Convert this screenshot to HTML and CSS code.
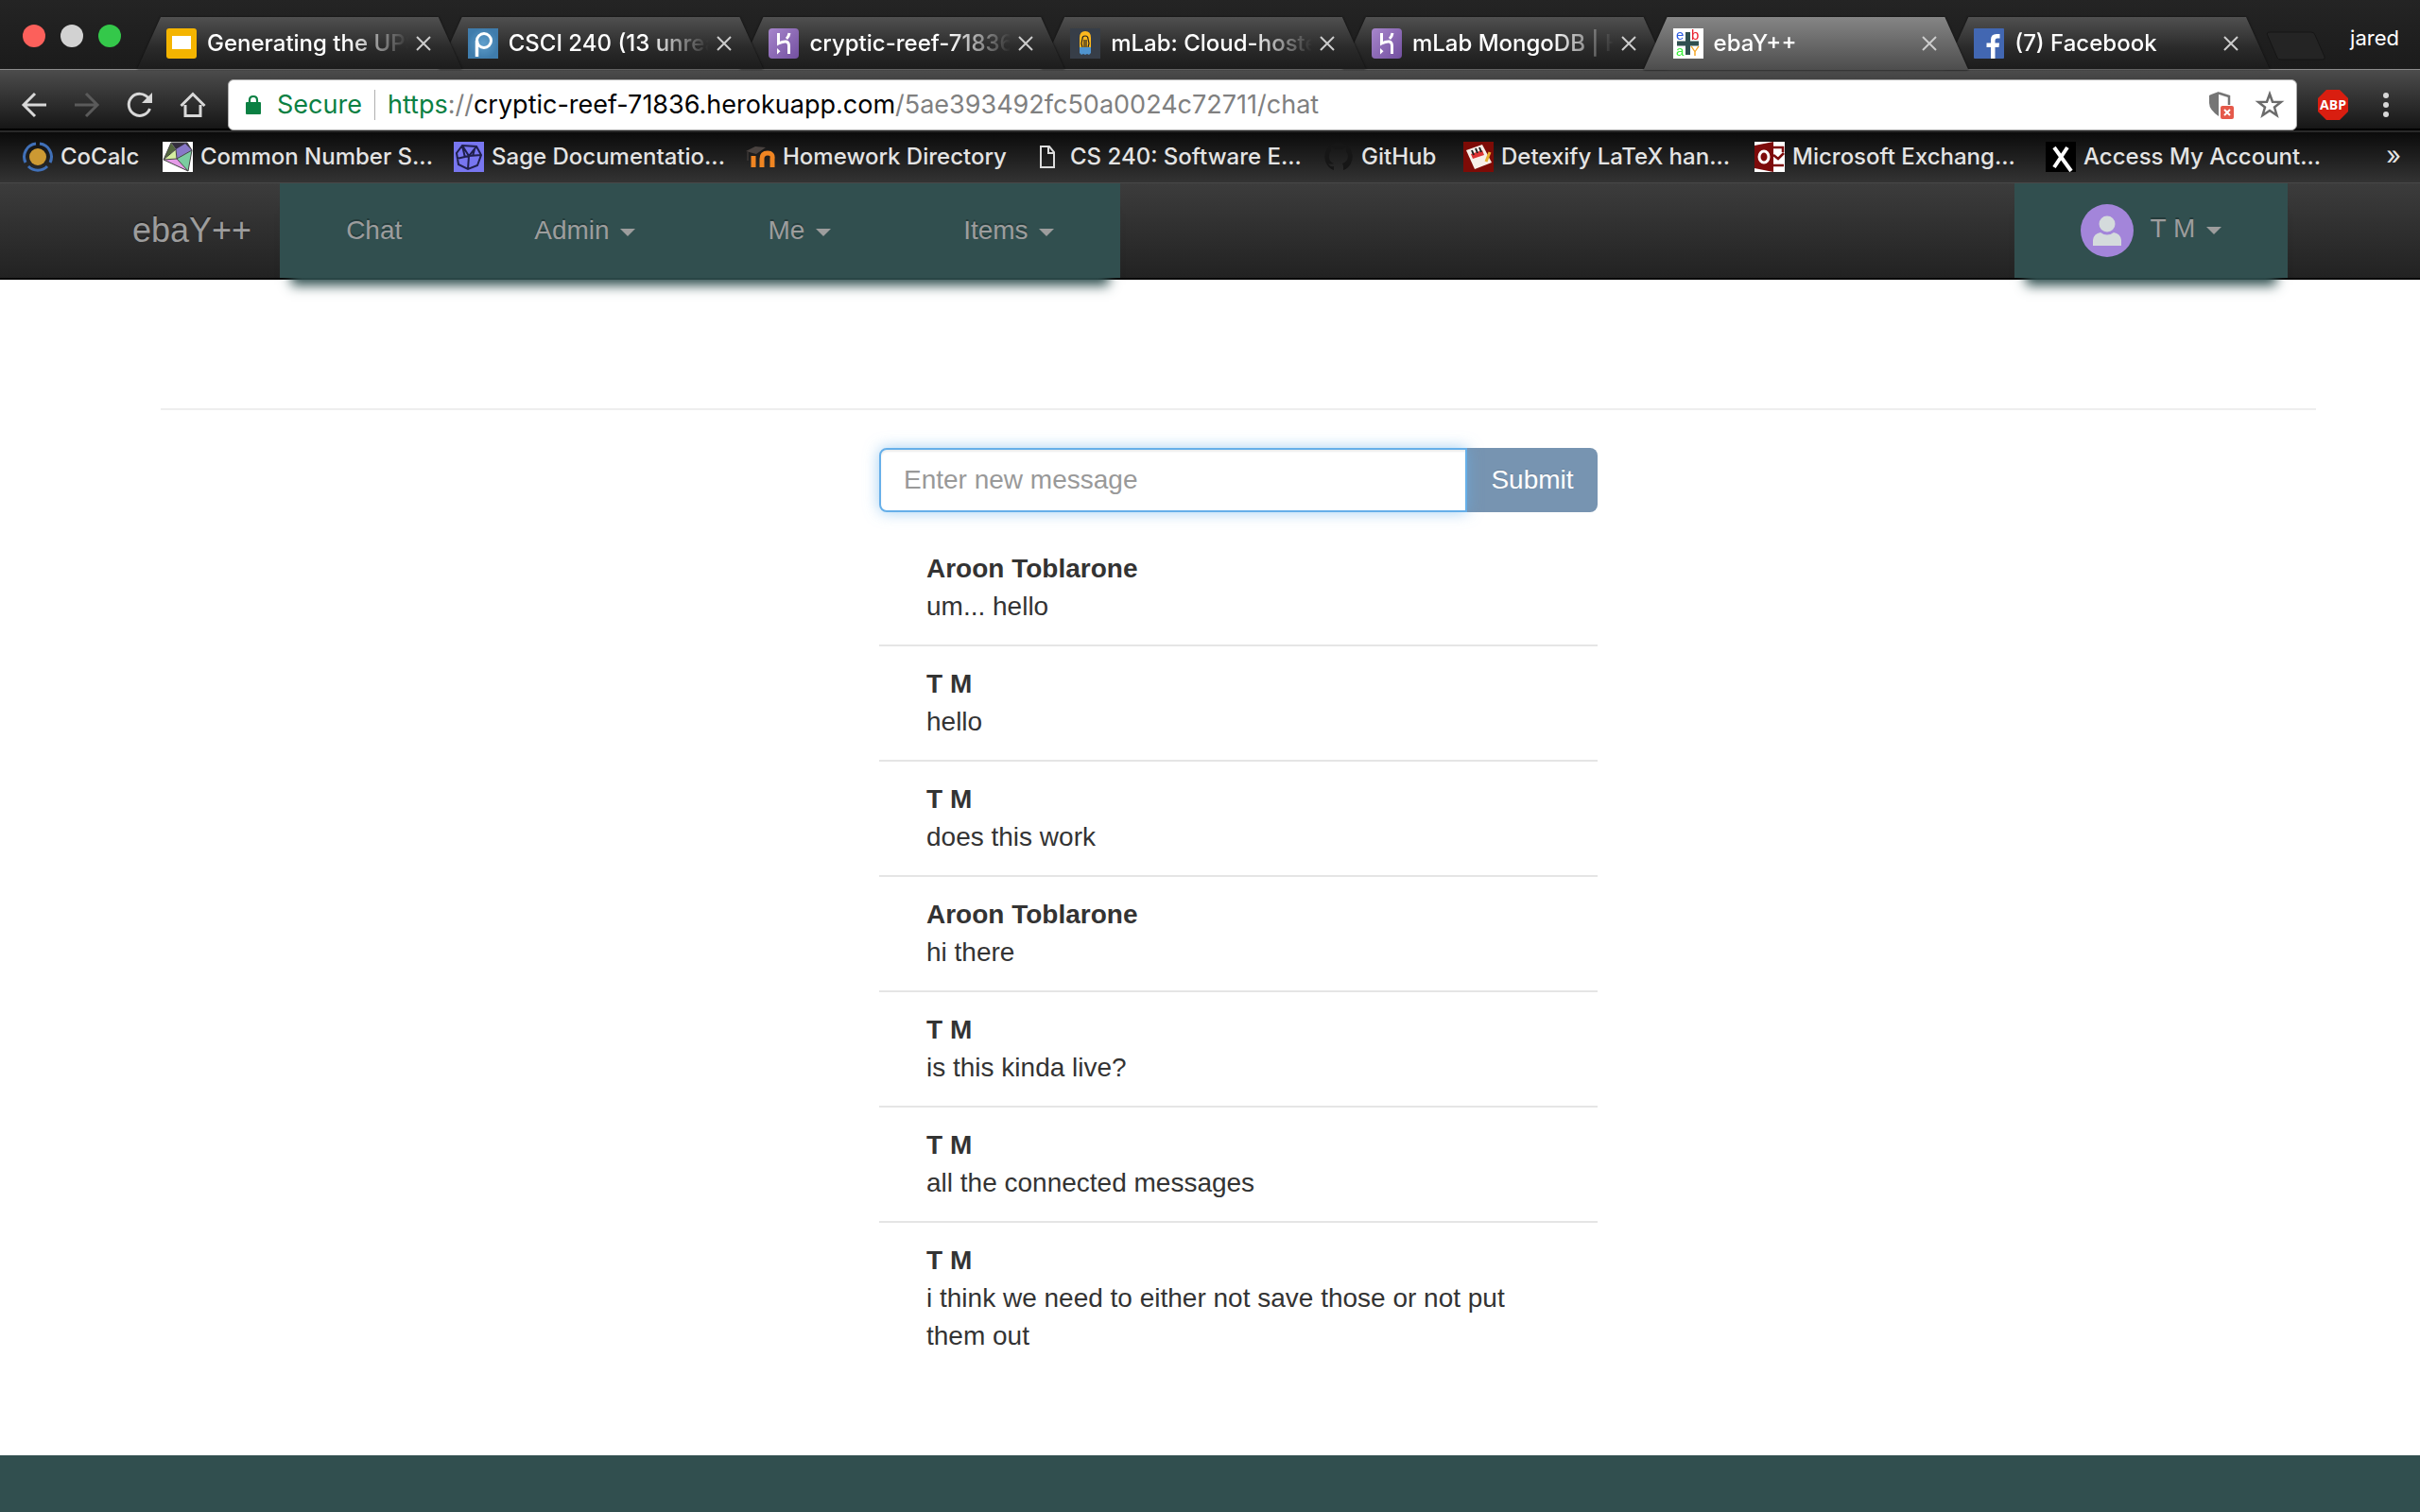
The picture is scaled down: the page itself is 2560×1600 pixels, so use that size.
FILE: index.html
```
<!DOCTYPE html>
<html lang="en">
<head>
<meta charset="utf-8">
<title>ebaY++</title>
<link rel="stylesheet" href="styles.css">
</head>
<body>
<header class="browser">
  <div class="tabstrip">
    <div class="lights"><span class="light light-close"></span><span class="light light-min"></span><span class="light light-max"></span></div>
    <nav class="tabs" aria-label="Tabs">
      <div class="tab"><div class="tab-body">
        <svg class="icon32" viewBox="0 0 32 32"><rect width="32" height="32" rx="3" fill="#f4b400"/><rect x="6" y="8" width="20" height="14" fill="#fff"/></svg>
        <span class="tab-title">Generating the UPS</span>
        <button class="tab-close" aria-label="Close tab"><svg viewBox="0 0 16 16"><path d="M1 1L15 15M15 1L1 15"/></svg></button>
      </div></div>
      <div class="tab"><div class="tab-body">
        <svg class="icon32" viewBox="0 0 32 32"><defs><radialGradient id="pz"><stop stop-color="#5f9fcc"/><stop offset="1" stop-color="#3f7cac"/></radialGradient></defs><rect width="32" height="32" fill="url(#pz)"/><path d="M9.500 30V13" fill="none" stroke="#fff" stroke-width="3.500"/><circle cx="17" cy="13" r="7.500" fill="none" stroke="#fff" stroke-width="3"/></svg>
        <span class="tab-title">CSCI 240 (13 unread)</span>
        <button class="tab-close" aria-label="Close tab"><svg viewBox="0 0 16 16"><path d="M1 1L15 15M15 1L1 15"/></svg></button>
      </div></div>
      <div class="tab"><div class="tab-body">
        <svg class="icon32" viewBox="0 0 32 32"><defs><linearGradient id="hk" x2="1" y2="1"><stop stop-color="#a786cc"/><stop offset="1" stop-color="#7350a0"/></linearGradient></defs><rect width="32" height="32" rx="4" fill="url(#hk)"/><path d="M10.500 5V16Q21 11 21.500 18V27M22 5Q21.500 8.500 19 11" fill="none" stroke="#fff" stroke-width="3"/><path d="M9 21L12.500 24.200L9 27.500Z" fill="#fff"/></svg>
        <span class="tab-title">cryptic-reef-71836</span>
        <button class="tab-close" aria-label="Close tab"><svg viewBox="0 0 16 16"><path d="M1 1L15 15M15 1L1 15"/></svg></button>
      </div></div>
      <div class="tab"><div class="tab-body">
        <svg class="icon32" viewBox="0 0 32 32"><rect width="32" height="32" fill="#373e48"/><path d="M10 21V10Q10 3 16 3T22 10V21Z" fill="#fdb81e"/><path d="M13 20L12 16L13 11Q13 8 16 8T19 11L20 16L19 20M15 20V12M17 20V12" fill="none" stroke="#222" stroke-width="1.200"/><path d="M10 20H22V26L20 28L18 27L16 28L14 27L12 28L10 26Z" fill="#4f94d0"/></svg>
        <span class="tab-title">mLab: Cloud-hosted</span>
        <button class="tab-close" aria-label="Close tab"><svg viewBox="0 0 16 16"><path d="M1 1L15 15M15 1L1 15"/></svg></button>
      </div></div>
      <div class="tab"><div class="tab-body">
        <svg class="icon32" viewBox="0 0 32 32"><rect width="32" height="32" rx="4" fill="url(#hk)"/><path d="M10.500 5V16Q21 11 21.500 18V27M22 5Q21.500 8.500 19 11" fill="none" stroke="#fff" stroke-width="3"/><path d="M9 21L12.500 24.200L9 27.500Z" fill="#fff"/></svg>
        <span class="tab-title">mLab MongoDB | H</span>
        <button class="tab-close" aria-label="Close tab"><svg viewBox="0 0 16 16"><path d="M1 1L15 15M15 1L1 15"/></svg></button>
      </div></div>
      <div class="tab tab-active"><div class="tab-body">
        <svg class="icon32" viewBox="0 0 32 32" font-family="Liberation Sans, sans-serif" font-size="15"><rect width="32" height="32" fill="#fff"/><path d="M15.500 4V28M4 16H27" stroke="#2f4f4f" stroke-width="5"/><text x="3" y="12" fill="#2a5be0">e</text><text x="19" y="12" fill="#e8202c">b</text><text x="3" y="29" fill="#3bf03b">a</text><text x="18" y="29" fill="#f5a623">Y</text></svg>
        <span class="tab-title">ebaY++</span>
        <button class="tab-close" aria-label="Close tab"><svg viewBox="0 0 16 16"><path d="M1 1L15 15M15 1L1 15"/></svg></button>
      </div></div>
      <div class="tab"><div class="tab-body">
        <svg class="icon32" viewBox="0 0 32 32"><rect width="32" height="32" rx="1" fill="#4267b2"/><path d="M18 32V20H13.500V15.500H18V12Q18 6 24 6H27.500V10.500H25Q22.500 10.500 22.500 13V15.500H27L26.500 20H22.500V32Z" fill="#fff"/></svg>
        <span class="tab-title">(7) Facebook</span>
        <button class="tab-close" aria-label="Close tab"><svg viewBox="0 0 16 16"><path d="M1 1L15 15M15 1L1 15"/></svg></button>
      </div></div>
    </nav>
    <button class="new-tab" aria-label="New tab"><svg viewBox="0 0 64 32"><path d="M4 1H48Q51 1 52 4L62 27Q63 30 60 30H16Q13 30 12 28L2 5Q0 1 4 1Z" fill="#242424" stroke="#151515"/></svg></button>
    <span class="profile">jared</span>
  </div>

  <div class="toolbar">
    <button class="tool" aria-label="Back"><svg viewBox="0 0 32 32"><path d="M29 16H5M17 4L5 16L17 28"/></svg></button>
    <button class="tool tool-off" aria-label="Forward"><svg viewBox="0 0 32 32"><path d="M3 16H27M15 4L27 16L15 28"/></svg></button>
    <button class="tool" aria-label="Reload"><svg viewBox="0 0 32 32"><path d="M26.500 20A11.500 11.500 0 1 1 25 9"/><path class="solid" d="M29 3V14H18Z"/></svg></button>
    <button class="tool" aria-label="Home"><svg viewBox="0 0 32 32"><path d="M3.500 17L16 4.500L28.500 17M8 16V27.500H24V16"/></svg></button>
    <div class="omnibox">
      <svg class="lock" viewBox="0 0 16 22"><rect y="8" width="16" height="13" rx="1" fill="#0b8043"/><path d="M4 9V6Q4 2 8 2T12 6V9" fill="none" stroke="#0b8043" stroke-width="2.200"/></svg>
      <span class="secure">Secure</span>
      <span class="url"><span class="scheme">https</span>://<span class="host">cryptic-reef-71836.herokuapp.com</span>/5ae393492fc50a0024c72711/chat</span>
      <button class="omni-btn" aria-label="Blocked content"><svg viewBox="0 0 32 32"><path d="M6 5L14 2V28Q4 21 4 14V6Z" fill="#757575"/><path d="M14 3.500L25 7V16" fill="none" stroke="#757575" stroke-width="2.500"/><rect x="16" y="17" width="14" height="14" rx="2" fill="#e5594a"/><path d="M20 21L26 27M26 21L20 27" stroke="#fff" stroke-width="2"/></svg></button>
      <button class="omni-btn" aria-label="Bookmark this page"><svg viewBox="0 0 32 32"><path d="M16 4.500L19 12.700L28 13L21 18.500L23.500 27L16 22L8.500 27L11 18.500L4 13L13 12.700Z" fill="none" stroke="#6b6b6b" stroke-width="2.500"/></svg></button>
    </div>
    <button class="ext" aria-label="Adblock Plus"><svg viewBox="0 0 32 32"><path d="M9 0H23L32 9V23L23 32H9L0 23V9Z" fill="#d91e10"/><text x="16" y="21" text-anchor="middle" font-family="Open Sans, sans-serif" font-weight="700" font-size="14" fill="#fff">ABP</text></svg></button>
    <button class="menu" aria-label="Menu"><svg viewBox="0 0 8 32"><circle cx="4" cy="6" r="3"/><circle cx="4" cy="16" r="3"/><circle cx="4" cy="26" r="3"/></svg></button>
  </div>

  <nav class="bookmarks" aria-label="Bookmarks">
    <a class="bm bm-short" href="#"><svg class="icon32" viewBox="0 0 32 32"><circle cx="16" cy="16" r="9" fill="#cc9933"/><g fill="none" stroke="#4070b8" stroke-width="3"><path d="M14 2A14 14 0 0 0 3 22M18 2A14 14 0 0 1 29 22M6 26A14 14 0 0 0 26 26"/></g></svg>CoCalc</a>
    <a class="bm" href="#"><svg class="icon32" viewBox="0 0 32 32"><rect width="32" height="32" fill="#fff"/><path d="M1 19L9 1L14 8Z" fill="#54683f"/><path d="M9 1L26 1L31 9L14 8Z" fill="#332d3c"/><path d="M14 8L24 2L31 9L15 18Z" fill="#8878c8"/><path d="M1 19L14 8L15 18Z" fill="#d5efa0"/><path d="M1 19L15 18L27 31Z" fill="#e59be8"/><path d="M31 9L15 18L27 31Z" fill="#7bcda0"/><path d="M1 19L9 1L26 1L31 9L27 31ZM1 19L14 8M14 8L15 18M1 19L15 18L27 31M15 18L31 9" fill="none" stroke="#444"/></svg>Common Number S...</a>
    <a class="bm" href="#"><svg class="icon32" viewBox="0 0 32 32"><rect width="32" height="32" fill="#7876f0"/><g fill="none" stroke="#20204c" stroke-width="2"><path d="M9 4L24 5L29 14L25 25L15 29L5 24L3 12ZM9 4L16 15L24 5M3 18L16 15L29 14M16 15L15 29M9 4L12 17M22 8L20 15"/></g></svg>Sage Documentatio...</a>
    <a class="bm bm-mid" href="#"><svg class="icon32" viewBox="0 0 32 32"><path d="M9 27V15M18 27V18Q18 12 24 12T29 18V27" fill="none" stroke="#f08522" stroke-width="5"/><path d="M1 10L11 5L22 6L12 13Z" fill="#4a4340"/><path d="M3 11V20" stroke="#4a4340"/></svg>Homework Directory</a>
    <a class="bm" href="#"><svg class="icon32" viewBox="0 0 32 32"><path d="M9 5H18L23 11V27H9ZM17 5V12H23" fill="none" stroke="#ddd" stroke-width="2"/></svg>CS 240: Software E...</a>
    <a class="bm bm-short" href="#"><svg class="icon32" viewBox="0 0 32 32"><path d="M16 1A15 15 0 0 0 11 30V26Q7 27 5 23Q8 24 11 23Q5 21 6 14Q6 11 8 10L8 5L13 8H19L24 5V10Q26 12 26 15Q26 21 20 23Q21 24 21 26V30A15 15 0 0 0 16 1Z" fill="#161616"/></svg>GitHub</a>
    <a class="bm" href="#"><svg class="icon32" viewBox="0 0 32 32"><rect width="32" height="32" fill="#7d0b06"/><path d="M3 9L20 3L30 22L12 29Z" fill="#f7efe8"/><path d="M8 13L20 9L22 14L10 18Z" fill="#d33"/><path d="M9 9L11 14M13 7L15 12M17 6L19 11" stroke="#222" stroke-width="2"/><path d="M28 11L24 21" stroke="#e8b030" stroke-width="3"/></svg>Detexify LaTeX han...</a>
    <a class="bm" href="#"><svg class="icon32" viewBox="0 0 32 32"><rect width="32" height="32" fill="#fff"/><path d="M0 4L20 0V32L0 28Z" fill="#7d0b0b"/><ellipse cx="10" cy="16" rx="5" ry="6" fill="none" stroke="#fff" stroke-width="3"/><path d="M20 6H30V11M20 14L25 18L31 12M20 25H31" fill="none" stroke="#7d0b0b" stroke-width="2.500"/></svg>Microsoft Exchang...</a>
    <a class="bm" href="#"><svg class="icon32" viewBox="0 0 32 32"><rect width="32" height="32" fill="#000"/><path d="M9 6L27 31M23 6L9 27" fill="none" stroke="#fff" stroke-width="4"/></svg>Access My Account...</a>
    <button class="overflow" aria-label="More bookmarks">»</button>
  </nav>
</header>

<nav class="navbar">
  <a class="brand" href="#">ebaY++</a>
  <div class="nav-group">
    <a class="nav-link" href="#">Chat</a>
    <a class="nav-link" href="#">Admin <span class="caret"></span></a>
    <a class="nav-link" href="#">Me <span class="caret"></span></a>
    <a class="nav-link" href="#">Items <span class="caret"></span></a>
  </div>
  <div class="nav-group nav-user">
    <a class="nav-link user-link" href="#"><svg class="avatar" viewBox="0 0 56 56"><circle cx="28" cy="28" r="28" fill="#a385da"/><circle cx="28" cy="21" r="8.500" fill="#d4dbdc"/><path d="M13 44V38Q14 31 21 30Q28 35 35 30Q42 31 43 38V44Z" fill="#d4dbdc"/></svg><span class="user-name">T M <span class="caret"></span></span></a>
  </div>
</nav>

<main class="page">
  <div class="container">
    <hr class="rule">
    <div class="row">
      <section class="chat">
        <form class="composer">
          <input class="message-input" type="text" aria-label="New message" placeholder="Enter new message">
          <button class="submit" type="button">Submit</button>
        </form>
        <ul class="messages">
          <li class="message"><strong>Aroon Toblarone</strong><p>um... hello</p></li>
          <li class="message"><strong>T M</strong><p>hello</p></li>
          <li class="message"><strong>T M</strong><p>does this work</p></li>
          <li class="message"><strong>Aroon Toblarone</strong><p>hi there</p></li>
          <li class="message"><strong>T M</strong><p>is this kinda live?</p></li>
          <li class="message"><strong>T M</strong><p>all the connected messages</p></li>
          <li class="message"><strong>T M</strong><p>i think we need to either not save those or not put them out</p></li>
        </ul>
      </section>
    </div>
  </div>
</main>
<footer class="footer"></footer>
</body>
</html>
```
FILE: styles.css
```
* { box-sizing: border-box; }

body {
  margin: 0;
  min-height: 100vh;
  display: flex;
  flex-direction: column;
  background: #fff;
  color: #333;
  font: 28px/40px "Liberation Sans", Arial, sans-serif;
}

button {
  padding: 0;
  border: 0;
  background: none;
  color: inherit;
  font: inherit;
}

a { color: inherit; text-decoration: none; }
svg { display: block; flex: none; }
.icon32 { width: 32px; height: 32px; }

/* Browser chrome */
.browser {
  font-family: Inter, sans-serif;
  font-size: 24px;
  line-height: 32px;
  color: #e4e4e4;
}

.tabstrip {
  display: flex;
  align-items: flex-end;
  height: 73px;
  background: linear-gradient(#242424, #1b1b1b);
}

.lights { display: flex; gap: 16px; width: 145px; padding-left: 24px; align-self: flex-start; padding-top: 26px; }
.light { width: 24px; height: 24px; border-radius: 50%; }
.light-close { background: #fc605b; }
.light-min { background: #d2d2d2; }
.light-max { background: #34c84a; }

.tabs { display: flex; flex: 1; min-width: 0; height: 55px; }

.tab {
  flex: 1 1 0;
  min-width: 0;
  height: 55px;
  margin-right: -25px;
  filter: drop-shadow(0 0 1px #0c0c0c);
}
.tab:last-child { margin-right: 0; }
.tab:nth-child(1) { z-index: 7; }
.tab:nth-child(2) { z-index: 6; }
.tab:nth-child(3) { z-index: 5; }
.tab:nth-child(4) { z-index: 4; }
.tab:nth-child(5) { z-index: 3; }
.tab:nth-child(6) { z-index: 8; }
.tab:nth-child(7) { z-index: 1; }

.tab-body {
  display: flex;
  align-items: center;
  height: 55px;
  padding: 1px 33px 0 31px;
  background: linear-gradient(#505050, #2a2a2a 60%, #1c1c1c);
  clip-path: polygon(25px 0, calc(100% - 25px) 0, 100% 100%, 0 100%);
  color: #fff;
}
.tab-active .tab-body { height: 56px; padding-bottom: 1px; background: linear-gradient(#858585, #4d4d4d); }

.tab-title {
  flex: 1;
  min-width: 0;
  margin: 0 8px 0 11px;
  overflow: hidden;
  white-space: nowrap;
  font-weight: 500;
  -webkit-mask-image: linear-gradient(to left, transparent, #000 64px);
  mask-image: linear-gradient(to left, transparent, #000 64px);
}

.tab-close { width: 16px; }
.tab-close svg { width: 16px; height: 16px; fill: none; stroke: #ccc; stroke-width: 2; }

.new-tab { width: 64px; margin: 0 0 8px -4px; }
.new-tab svg { width: 64px; height: 32px; }
.profile { width: 99px; padding: 0 22px 18px 0; text-align: right; font-size: 22px; line-height: 30px; color: #fff; }

.toolbar {
  display: flex;
  align-items: center;
  height: 67px;
  padding: 9px 0 0 8px;
  border-top: 1px solid #8c8c8c;
  border-bottom: 2px solid #292929;
  background: linear-gradient(#4c4c4c, #161616 62px, #000 62px);
}
.tool { width: 56px; }
.tool svg { width: 32px; height: 32px; margin: 0 auto; fill: none; stroke: #d8d8d8; stroke-width: 3; }
.tool .solid { fill: #d8d8d8; stroke: none; }
.tool-off svg { stroke: #5a5a5a; }

.omnibox {
  display: flex;
  align-items: center;
  flex: 1;
  min-width: 0;
  height: 54px;
  margin-left: 9px;
  padding: 0 2px 0 18px;
  border: 1px solid #aaa;
  border-radius: 6px;
  background: #fff;
  font-size: 27px;
  color: #808080;
}
.lock { width: 16px; height: 22px; }
.secure { margin-left: 17px; padding-right: 13px; border-right: 1px solid #b0b0b0; color: #0b8043; }
.url { flex: 1; min-width: 0; margin-left: 13px; overflow: hidden; white-space: nowrap; }
.scheme { color: #0b8043; }
.host { color: #000; }
.omni-btn { width: 52px; }
.omni-btn svg { width: 32px; height: 32px; margin: 0 auto; }
.ext { width: 32px; margin: 0 36px 0 22px; }
.ext svg { width: 32px; height: 32px; }
.menu { width: 8px; margin-right: 32px; }
.menu svg { width: 8px; height: 32px; fill: #d8d8d8; }

.bookmarks {
  display: flex;
  align-items: center;
  height: 54px;
  padding: 0 20px 4px 24px;
  overflow: hidden;
  border-bottom: 1px solid #484848;
  background: linear-gradient(#0b0b0b, #333);
}
.bm { display: flex; flex: none; align-items: center; gap: 8px; width: 308px; padding-top: 2px; font-weight: 500; white-space: nowrap; }
.bm-short { width: 148px; }
.bm-mid { width: 304px; }
.overflow { margin-left: auto; font-size: 27px; }

/* Site navigation */
.navbar {
  display: flex;
  height: 102px;
  padding: 0 140px;
  border-bottom: 2px solid #080808;
  background: linear-gradient(#3c3c3c, #222);
  color: #9d9d9d;
  text-shadow: 0 -2px 0 rgba(0, 0, 0, .25);
}
.brand { padding: 30px 30px 30px 0; font-size: 36px; }
.nav-group {
  display: flex;
  height: 100px;
  background: #314f4f;
  box-shadow: 0 20px 12px -12px #2f4f4f;
}
.nav-link { padding: 30px 70px; }
.nav-user { margin-left: auto; }
.user-link { display: flex; align-items: center; gap: 18px; }
.avatar { width: 56px; height: 56px; }
.user-name { padding-bottom: 4px; }
.caret {
  display: inline-block;
  margin-left: 4px;
  vertical-align: middle;
  border-top: 8px solid;
  border-right: 8px solid transparent;
  border-left: 8px solid transparent;
}

/* Chat page */
.page { flex: 1; padding: 136px 0 106px 60px; }
.container { max-width: 2280px; margin: 0 auto; }
.rule { margin: 0 0 40px; border: 0; border-top: 2px solid #eee; }
.row { display: grid; grid-template-columns: repeat(3, 1fr); }
.chat { grid-column: 2; }
.composer { display: flex; }
.message-input {
  flex: 1;
  min-width: 0;
  height: 68px;
  padding: 12px 24px;
  border: 2px solid #66afe9;
  border-radius: 8px 0 0 8px;
  background: #fff;
  box-shadow: inset 0 2px 2px rgba(0, 0, 0, .075), 0 0 16px rgba(102, 175, 233, .6);
  color: #555;
  font: inherit;
  z-index: 1;
}
.message-input::placeholder { color: #999; opacity: 1; }
.submit {
  width: 138px;
  border-radius: 0 8px 8px 0;
  background: #7794b1;
  color: #fff;
  text-shadow: 0 -1px 0 rgba(0, 0, 0, .15);
}
.messages { margin: 20px 0 0; padding: 0; list-style: none; }
.message { padding: 20px 50px; border-bottom: 2px solid #e5e5e5; }
.message:last-child { border-bottom: 0; padding-bottom: 0; }
.message strong { display: block; }
.message p { margin: 0; }
.footer { height: 60px; background: #314f4f; }
```
